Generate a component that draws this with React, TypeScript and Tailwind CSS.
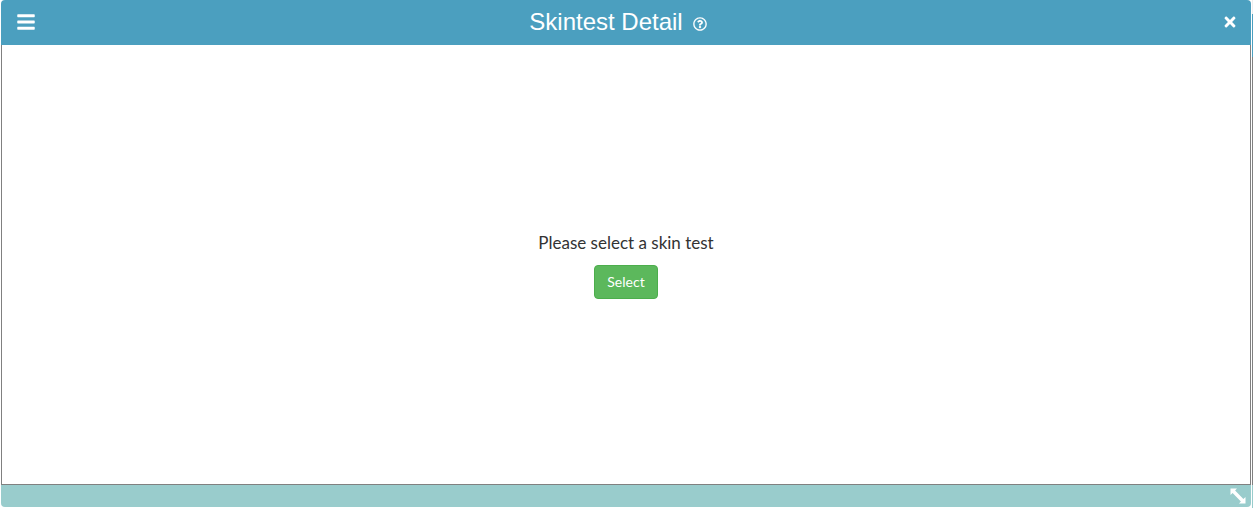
import React from "react";
import { FaBars, FaRegQuestionCircle, FaTimes } from "react-icons/fa";

function ResizeIcon() {
  return (
    <svg viewBox="0 0 16 16" className="w-4 h-4" fill="currentColor" aria-hidden="true">
      <path d="M.5 .5h6.500L5.100 2.600l8.300 8.300L15.500 9v6.500H9l1.900-2.100-8.300-8.300L.5 7z" />
    </svg>
  );
}

function Header() {
  return (
    <header className="flex items-center justify-between h-[45px] pl-[15px] pr-[13px] pb-px bg-[#4b9fbf] text-white rounded-t">
      <button type="button" aria-label="Menu" className="w-6 cursor-pointer">
        <FaBars className="w-5 h-5" />
      </button>
      <div className="flex items-center gap-2.5 pr-[18px]">
        <h1 className="text-2xl font-normal">Skintest Detail</h1>
        <button type="button" aria-label="Help" className="pt-1 cursor-pointer">
          <FaRegQuestionCircle className="w-3.5 h-3.5" stroke="currentColor" strokeWidth={4} />
        </button>
      </div>
      <button type="button" aria-label="Close" className="w-6 flex justify-end cursor-pointer">
        <FaTimes className="w-4 h-4" />
      </button>
    </header>
  );
}

export default function App() {
  return (
    <div className="flex h-screen bg-white font-['Liberation_Sans',Arial,sans-serif]">
      <div className="flex-grow flex flex-col pl-px pb-px">
        <Header />
        <main className="flex-grow flex flex-col items-center justify-center gap-2 pb-0.5 border border-t-0 border-[#808080] font-[Lato,sans-serif]">
          <p className="text-[17px] leading-7 text-[#333333]">Please select a skin test</p>
          <button
            type="button"
            className="h-[34px] px-3 text-sm text-white bg-[#5cb85c] border border-[#4cae4c] rounded cursor-pointer"
          >
            Select
          </button>
        </main>
        <footer className="flex justify-end items-center h-[22px] pr-[5px] bg-[#99cccc] text-white rounded-b">
          <ResizeIcon />
        </footer>
      </div>
      {/* Edge of the next panel */}
      <div className="flex flex-col w-px ml-px pt-3.5 bg-[#eeeeee]">
        <div className="h-[43px] bg-[#4b9fbf]" />
        <div className="flex-grow bg-[#808080]" />
        <div className="h-[23px] bg-[#99cccc]" />
      </div>
    </div>
  );
}
